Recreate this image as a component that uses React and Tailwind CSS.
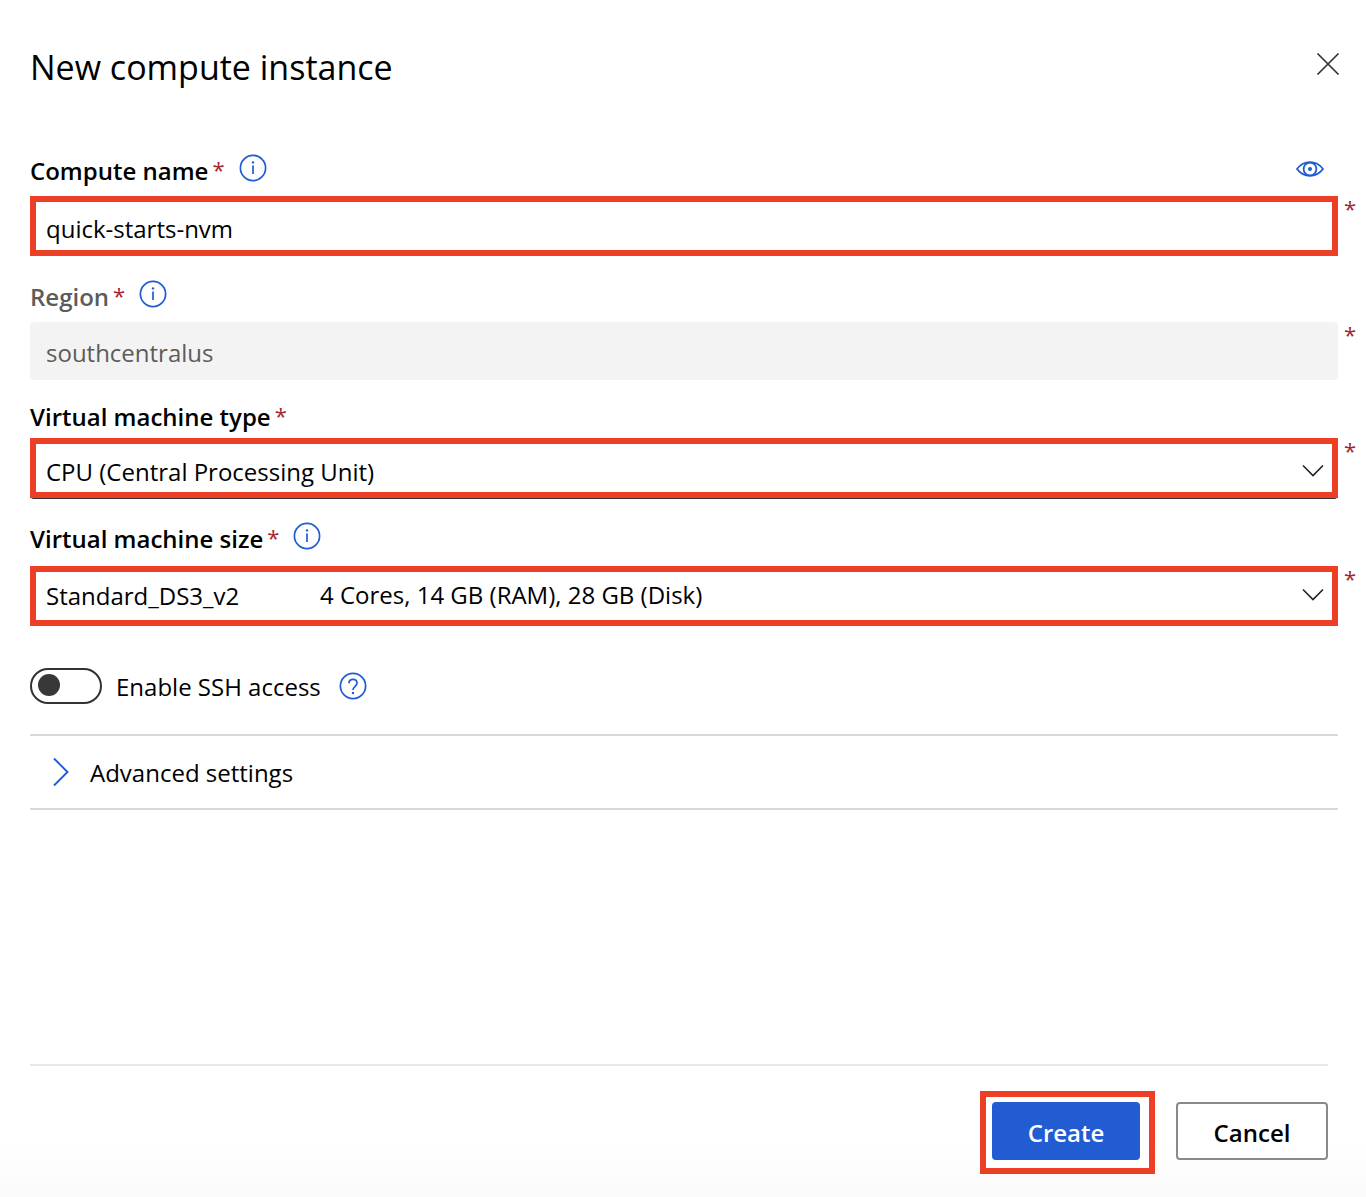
import React, { useState } from "react";

const iconButton = "flex shrink-0 items-center justify-center text-[#1f5bd3]";

function InfoIcon() {
  return (
    <svg width="28" height="28" viewBox="0 0 28 28" fill="none" aria-hidden="true">
      <circle cx="14" cy="14" r="12.6" stroke="currentColor" strokeWidth="1.7" />
      <path d="M14 11.6V20" stroke="currentColor" strokeWidth="1.7" />
      <circle cx="14" cy="8.4" r="1.2" fill="currentColor" />
    </svg>
  );
}

function HelpIcon() {
  return (
    <svg width="28" height="28" viewBox="0 0 28 28" fill="none" aria-hidden="true">
      <circle cx="14" cy="14" r="12.6" stroke="currentColor" strokeWidth="1.7" />
      <path
        d="M10 11.2C10 8.8 11.8 7.4 14 7.4s4 1.4 4 3.7c0 3.1-4 3.3-4 6.9"
        stroke="currentColor"
        strokeWidth="1.7"
      />
      <circle cx="14" cy="21" r="1.2" fill="currentColor" />
    </svg>
  );
}

function EyeIcon() {
  return (
    <svg width="28" height="16" viewBox="0 0 28 16" fill="none" aria-hidden="true">
      <path
        d="M1 8C4.2 3.8 8.8 1.2 14 1.2S23.8 3.8 27 8c-3.2 4.2-7.8 6.8-13 6.8S4.2 12.200 1 8Z"
        stroke="currentColor"
        strokeWidth="1.8"
      />
      <circle cx="14" cy="8" r="6.4" stroke="currentColor" strokeWidth="1.8" />
      <circle cx="14" cy="8" r="2" fill="currentColor" />
    </svg>
  );
}

function CloseIcon() {
  return (
    <svg width="24" height="24" viewBox="0 0 24 24" fill="none" aria-hidden="true">
      <path d="M1.5 1.5 22.5 22.5M22.5 1.5 1.5 22.5" stroke="currentColor" strokeWidth="1.7" />
    </svg>
  );
}

function ChevronDown() {
  return (
    <svg width="22" height="14" viewBox="0 0 22 14" fill="none" aria-hidden="true">
      <path d="M1 1.5 11 11.5 21 1.5" stroke="currentColor" strokeWidth="1.6" />
    </svg>
  );
}

function ChevronRight() {
  return (
    <svg width="18" height="30" viewBox="0 0 18 30" fill="none" aria-hidden="true">
      <path d="M2 1.5 15.5 15 2 28.5" stroke="currentColor" strokeWidth="1.9" />
    </svg>
  );
}

function Star() {
  return (
    <span aria-hidden="true" className="text-[22px] font-normal text-[#a4262c]">
      *
    </span>
  );
}

function Field({ id, label, info, muted, action, className, children }) {
  return (
    <div className={`flex flex-col ${className}`}>
      <div className="flex h-10 items-center pr-[42px]">
        <label
          htmlFor={id}
          className={`flex gap-1 text-2xl font-semibold ${muted ? "text-[#5c5c5c]" : "text-black"}`}
        >
          {label}
          <Star />
        </label>
        {info && (
          <button type="button" aria-label={`About ${label}`} className={`mb-1.5 ml-3.5 ${iconButton}`}>
            <InfoIcon />
          </button>
        )}
        {action}
      </div>
      <div className="flex">
        <div className="min-w-0 flex-1">{children}</div>
        <div className="w-7 pl-1.5 leading-6">
          <Star />
        </div>
      </div>
    </div>
  );
}

function FormSelect({ id, options, detail, className = "" }) {
  return (
    <div className={`grid h-[60px] items-center border-6 border-[#ec3f25] bg-white ${className}`}>
      <select
        id={id}
        className="col-start-1 row-start-1 h-10 w-full appearance-none bg-transparent pl-2.5 text-2xl outline-none"
      >
        {options.map((option) => (
          <option key={option}>{option}</option>
        ))}
      </select>
      {detail && (
        <span className="pointer-events-none col-start-1 row-start-1 mb-0.5 ml-[284px] text-2xl">{detail}</span>
      )}
      <span className="pointer-events-none col-start-1 row-start-1 mr-2 mb-0.5 justify-self-end text-[#222]">
        <ChevronDown />
      </span>
    </div>
  );
}

export default function App() {
  const [name, setName] = useState("quick-starts-nvm");
  const [ssh, setSsh] = useState(false);

  return (
    <form
      onSubmit={(event) => event.preventDefault()}
      className="flex min-h-screen flex-col bg-white pl-[30px] font-['Open_Sans',sans-serif] text-black"
    >
      <header className="flex items-start justify-between pt-10 pr-[26px]">
        <h1 className="text-[34px] leading-[54px]">New compute instance</h1>
        <button type="button" aria-label="Close" className="mt-3 text-[#333]">
          <CloseIcon />
        </button>
      </header>

      <main className="flex-1">
        <Field
          id="name"
          label="Compute name"
          info
          className="mt-[57px] gap-[5px]"
          action={
            <button type="button" aria-label="Preview" className={`mb-1 ml-auto ${iconButton}`}>
              <EyeIcon />
            </button>
          }
        >
          <input
            id="name"
            required
            value={name}
            onChange={(event) => setName(event.target.value)}
            className="block h-[60px] w-full border-6 border-[#ec3f25] bg-white pt-1 pl-2.5 text-2xl outline-none"
          />
        </Field>

        <Field id="region" label="Region" info muted className="mt-[21px] gap-[5px]">
          <input
            id="region"
            disabled
            value="southcentralus"
            className="block h-[58px] w-full rounded-sm bg-[#f3f3f3] pt-0.5 pl-4 text-2xl text-[#5c5c5c]"
          />
        </Field>

        <Field id="vm-type" label="Virtual machine type" className="mt-[17px] gap-px">
          <div className="rounded-b-sm border-b border-[#333]">
            <FormSelect
              id="vm-type"
              className="pt-2"
              options={["CPU (Central Processing Unit)", "GPU (Graphics Processing Unit)"]}
            />
          </div>
        </Field>

        <Field id="vm-size" label="Virtual machine size" info className="mt-5 gap-[7px]">
          <FormSelect
            id="vm-size"
            options={["Standard_DS3_v2"]}
            detail="4 Cores, 14 GB (RAM), 28 GB (Disk)"
          />
        </Field>

        <div className="mt-[42px] flex h-9 items-center">
          <label className="flex items-center text-2xl">
            <input
              type="checkbox"
              role="switch"
              checked={ssh}
              onChange={(event) => setSsh(event.target.checked)}
              className="h-9 w-[72px] appearance-none rounded-full border-2 border-[#333] px-1.5 py-1 before:block before:size-[22px] before:rounded-full before:bg-[#383838] checked:before:ml-auto"
            />
            <span className="pt-0.5 pl-3.5">Enable SSH access</span>
          </label>
          <button type="button" aria-label="About SSH access" className={`ml-[18px] ${iconButton}`}>
            <HelpIcon />
          </button>
        </div>

        <div className="mt-[30px] mr-7 border-y-2 border-[#d9d9d9]">
          <button type="button" aria-expanded="false" className="flex h-[72px] w-full items-center gap-5 pl-[22px] text-2xl">
            <span className="text-[#1f5bd3]">
              <ChevronRight />
            </span>
            <span className="pt-0.5">Advanced settings</span>
          </button>
        </div>
      </main>

      <footer className="-ml-[30px] bg-linear-to-b from-white from-60% to-[#fafafa] pr-[38px] pb-[23px] pl-[30px]">
        <div className="ml-0 flex items-start justify-end gap-[21px] border-t-2 border-[#e8e8e8] pt-[25px]">
          <div className="border-6 border-[#ec3f25] bg-white pt-[5px] pr-[9px] pb-2 pl-1.5">
            <button type="submit" className="block h-[58px] w-[148px] rounded-sm bg-[#215cd2] pt-1 text-2xl font-semibold text-white">
              Create
            </button>
          </div>
          <button type="button" className="mt-[11px] h-[58px] w-[152px] rounded-sm border-2 border-[#8a8a8a] bg-white pt-1 text-2xl font-semibold">
            Cancel
          </button>
        </div>
      </footer>
    </form>
  );
}
